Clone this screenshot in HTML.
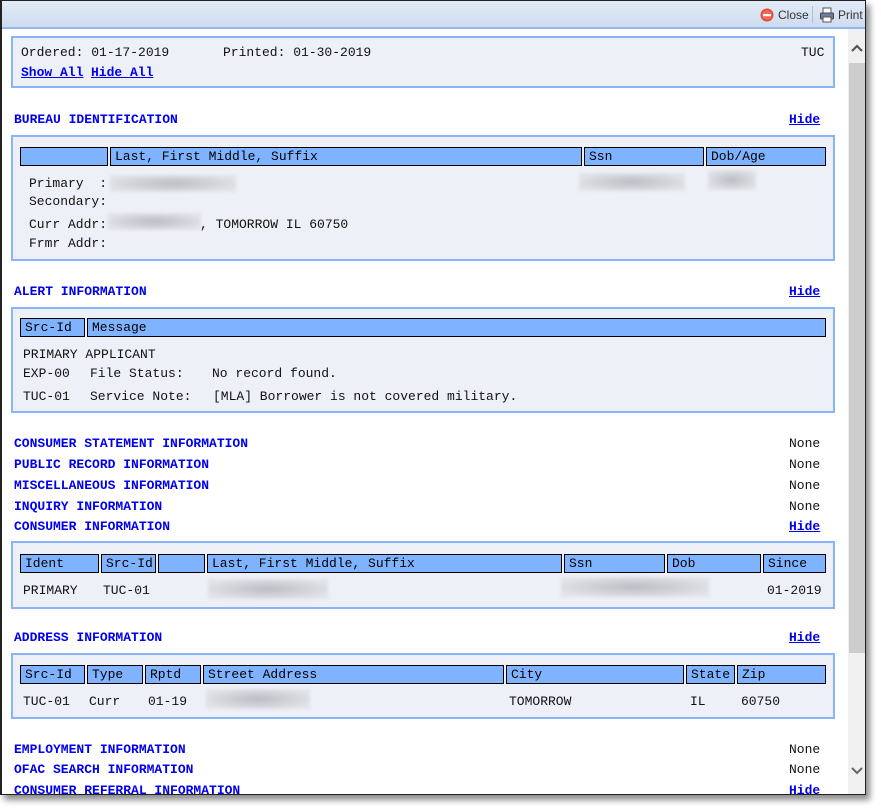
<!DOCTYPE html>
<html><head><meta charset="utf-8"><style>
*{margin:0;padding:0;box-sizing:border-box}
body{width:881px;height:809px;background:#fff;position:relative;overflow:hidden;font-family:"Liberation Mono",monospace;font-size:13px;color:#111}
#win{position:absolute;left:0;top:0;width:866px;height:795px;border:1px solid #222;border-left-width:2px;background:#fff;overflow:hidden;box-shadow:4px 5px 6px rgba(0,0,0,.45)}
#tb{position:absolute;left:0;top:0;width:864px;height:28px;background:linear-gradient(#e2ebf7,#cfdcef);border-bottom:2px solid #93b8ee}
.t{position:absolute;white-space:pre;line-height:16px;height:16px}
.blue{color:#0000ee;font-weight:bold}
.u{text-decoration:underline}
.box{position:absolute;left:9px;width:824px;border:2px solid #8ab4f8;background:#eef0f7}
.h{position:absolute;height:19px;background:#80b3ff;border:1px solid #000;line-height:17px;padding-left:4px;white-space:pre;color:#000}
.blur{position:absolute;background:radial-gradient(ellipse at 50% 50%,#bcbdc4,#e2e3e9 80%);filter:blur(1.5px)}
#sb{position:absolute;left:846px;top:28px;width:18px;height:767px;background:#f0f0f0}
</style></head><body>
<div id="win">
<div id="tb">
 <svg style="position:absolute;left:758px;top:7px" width="14" height="14"><circle cx="7" cy="7" r="6.5" fill="#e04a3a"/><circle cx="7" cy="7" r="5" fill="#f06a55"/><rect x="3" y="6" width="8" height="2.2" fill="#fff"/></svg>
 <span style="position:absolute;left:776px;top:7px;font:12px 'Liberation Sans',sans-serif;color:#333">Close</span>
 <div style="position:absolute;left:810px;top:5px;width:1px;height:17px;background:#a9c1e3"></div>
 <svg style="position:absolute;left:817px;top:6px" width="16" height="16"><rect x="4" y="1" width="8" height="5" fill="#fff" stroke="#555"/><rect x="1.5" y="6" width="13" height="6" rx="1" fill="#6f7f97" stroke="#445"/><rect x="4" y="10" width="8" height="5" fill="#fff" stroke="#555"/></svg>
 <span style="position:absolute;left:836px;top:7px;font:12px 'Liberation Sans',sans-serif;color:#333">Print</span>
</div>
<div id="sb">
 <div style="position:absolute;left:1px;top:34px;width:16px;height:590px;background:#cdcdcd"></div>
 <svg style="position:absolute;left:2px;top:14px" width="14" height="10"><path d="M2 8 L7 3 L12 8" stroke="#555" stroke-width="2.2" fill="none"/></svg>
 <svg style="position:absolute;left:2px;top:737px" width="14" height="10"><path d="M2 2 L7 7 L12 2" stroke="#666" stroke-width="2" fill="none"/></svg>
</div>

<div class="box" style="top:35px;height:52px"></div>
<div class="t" style="left:19px;top:44px">Ordered: 01-17-2019</div>
<div class="t" style="left:221px;top:44px">Printed: 01-30-2019</div>
<div class="t" style="left:799px;top:44px">TUC</div>
<div class="t blue u" style="left:19px;top:64px">Show All</div>
<div class="t blue u" style="left:89px;top:64px">Hide All</div>

<div class="t blue" style="left:12px;top:111px">BUREAU IDENTIFICATION</div>
<div class="t blue u" style="left:787px;top:111px">Hide</div>
<div class="box" style="top:134px;height:126px"></div>
<div class="h" style="left:18px;top:146px;width:88px"></div>
<div class="h" style="left:108px;top:146px;width:472px">Last, First Middle, Suffix</div>
<div class="h" style="left:582px;top:146px;width:120px">Ssn</div>
<div class="h" style="left:704px;top:146px;width:120px">Dob/Age</div>
<div class="t" style="left:27px;top:175px">Primary  :</div>
<div class="blur" style="left:108px;top:174px;width:126px;height:17px"></div>
<div class="blur" style="left:577px;top:172px;width:106px;height:18px"></div>
<div class="blur" style="left:706px;top:169px;width:48px;height:20px"></div>
<div class="t" style="left:27px;top:193px">Secondary:</div>
<div class="t" style="left:27px;top:216px">Curr Addr:</div>
<div class="blur" style="left:106px;top:212px;width:93px;height:17px"></div>
<div class="t" style="left:198px;top:216px">, TOMORROW IL 60750</div>
<div class="t" style="left:27px;top:235px">Frmr Addr:</div>

<div class="t blue" style="left:12px;top:283px">ALERT INFORMATION</div>
<div class="t blue u" style="left:787px;top:283px">Hide</div>
<div class="box" style="top:306px;height:106px"></div>
<div class="h" style="left:18px;top:317px;width:65px">Src-Id</div>
<div class="h" style="left:85px;top:317px;width:739px">Message</div>
<div class="t" style="left:21px;top:346px">PRIMARY APPLICANT</div>
<div class="t" style="left:21px;top:365px">EXP-00</div>
<div class="t" style="left:88px;top:365px">File Status:</div>
<div class="t" style="left:210px;top:365px">No record found.</div>
<div class="t" style="left:21px;top:388px">TUC-01</div>
<div class="t" style="left:88px;top:388px">Service Note:</div>
<div class="t" style="left:211px;top:388px">[MLA] Borrower is not covered military.</div>

<div class="t blue" style="left:12px;top:435px">CONSUMER STATEMENT INFORMATION</div>
<div class="t" style="left:787px;top:435px">None</div>
<div class="t blue" style="left:12px;top:456px">PUBLIC RECORD INFORMATION</div>
<div class="t" style="left:787px;top:456px">None</div>
<div class="t blue" style="left:12px;top:477px">MISCELLANEOUS INFORMATION</div>
<div class="t" style="left:787px;top:477px">None</div>
<div class="t blue" style="left:12px;top:498px">INQUIRY INFORMATION</div>
<div class="t" style="left:787px;top:498px">None</div>
<div class="t blue" style="left:12px;top:518px">CONSUMER INFORMATION</div>
<div class="t blue u" style="left:787px;top:518px">Hide</div>

<div class="box" style="top:540px;height:68px"></div>
<div class="h" style="left:18px;top:553px;width:79px">Ident</div>
<div class="h" style="left:99px;top:553px;width:55px">Src-Id</div>
<div class="h" style="left:156px;top:553px;width:47px"></div>
<div class="h" style="left:205px;top:553px;width:355px">Last, First Middle, Suffix</div>
<div class="h" style="left:562px;top:553px;width:101px">Ssn</div>
<div class="h" style="left:665px;top:553px;width:94px">Dob</div>
<div class="h" style="left:761px;top:553px;width:63px">Since</div>
<div class="t" style="left:21px;top:582px">PRIMARY</div>
<div class="t" style="left:101px;top:582px">TUC-01</div>
<div class="blur" style="left:206px;top:578px;width:120px;height:20px"></div>
<div class="blur" style="left:559px;top:576px;width:148px;height:20px"></div>
<div class="t" style="left:765px;top:582px">01-2019</div>

<div class="t blue" style="left:12px;top:629px">ADDRESS INFORMATION</div>
<div class="t blue u" style="left:787px;top:629px">Hide</div>
<div class="box" style="top:652px;height:66px"></div>
<div class="h" style="left:18px;top:664px;width:65px">Src-Id</div>
<div class="h" style="left:85px;top:664px;width:56px">Type</div>
<div class="h" style="left:143px;top:664px;width:56px">Rptd</div>
<div class="h" style="left:201px;top:664px;width:301px">Street Address</div>
<div class="h" style="left:504px;top:664px;width:178px">City</div>
<div class="h" style="left:684px;top:664px;width:49px">State</div>
<div class="h" style="left:735px;top:664px;width:89px">Zip</div>
<div class="t" style="left:21px;top:693px">TUC-01</div>
<div class="t" style="left:87px;top:693px">Curr</div>
<div class="t" style="left:146px;top:693px">01-19</div>
<div class="blur" style="left:204px;top:688px;width:104px;height:20px"></div>
<div class="t" style="left:507px;top:693px">TOMORROW</div>
<div class="t" style="left:688px;top:693px">IL</div>
<div class="t" style="left:739px;top:693px">60750</div>

<div class="t blue" style="left:12px;top:741px">EMPLOYMENT INFORMATION</div>
<div class="t" style="left:787px;top:741px">None</div>
<div class="t blue" style="left:12px;top:761px">OFAC SEARCH INFORMATION</div>
<div class="t" style="left:787px;top:761px">None</div>
<div class="t blue" style="left:12px;top:782px">CONSUMER REFERRAL INFORMATION</div>
<div class="t blue u" style="left:787px;top:782px">Hide</div>
</div>
</body></html>
